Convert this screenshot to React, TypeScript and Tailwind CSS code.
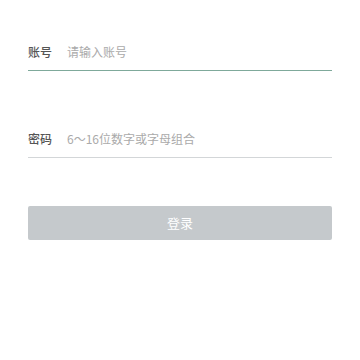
import { useState } from "react";

export default function App() {
  const [account, setAccount] = useState("");
  const [password, setPassword] = useState("");

  return (
    <div
      className="min-h-[360px] w-full bg-white px-7 pt-[33px]"
      style={{ fontFamily: '"Noto Sans CJK SC", "Noto Sans", sans-serif' }}
    >
      <div className="flex h-[38px] items-center border-b border-[#7fa99b]">
        <label className="w-[39px] shrink-0 text-[12px] font-medium text-[#555]">账号</label>
        <input
          type="text"
          value={account}
          onChange={(e) => setAccount(e.target.value)}
          placeholder="请输入账号"
          className="min-w-0 flex-1 bg-transparent text-[12px] text-[#333] outline-none placeholder:text-[#aaa]"
        />
      </div>

      <div className="mt-[49px] flex h-[38px] items-center border-b border-[#d3d6d8]">
        <label className="w-[39px] shrink-0 text-[12px] font-medium text-[#555]">密码</label>
        <input
          type="password"
          value={password}
          onChange={(e) => setPassword(e.target.value)}
          placeholder="6～16位数字或字母组合"
          className="min-w-0 flex-1 bg-transparent text-[12px] text-[#333] outline-none placeholder:text-[#aaa]"
        />
      </div>

      <button
        type="button"
        disabled
        className="mt-[48px] flex h-[34px] w-full items-center justify-center rounded-[2px] bg-[#c5c9cc] text-[13px] text-white"
      >
        登录
      </button>
    </div>
  );
}
